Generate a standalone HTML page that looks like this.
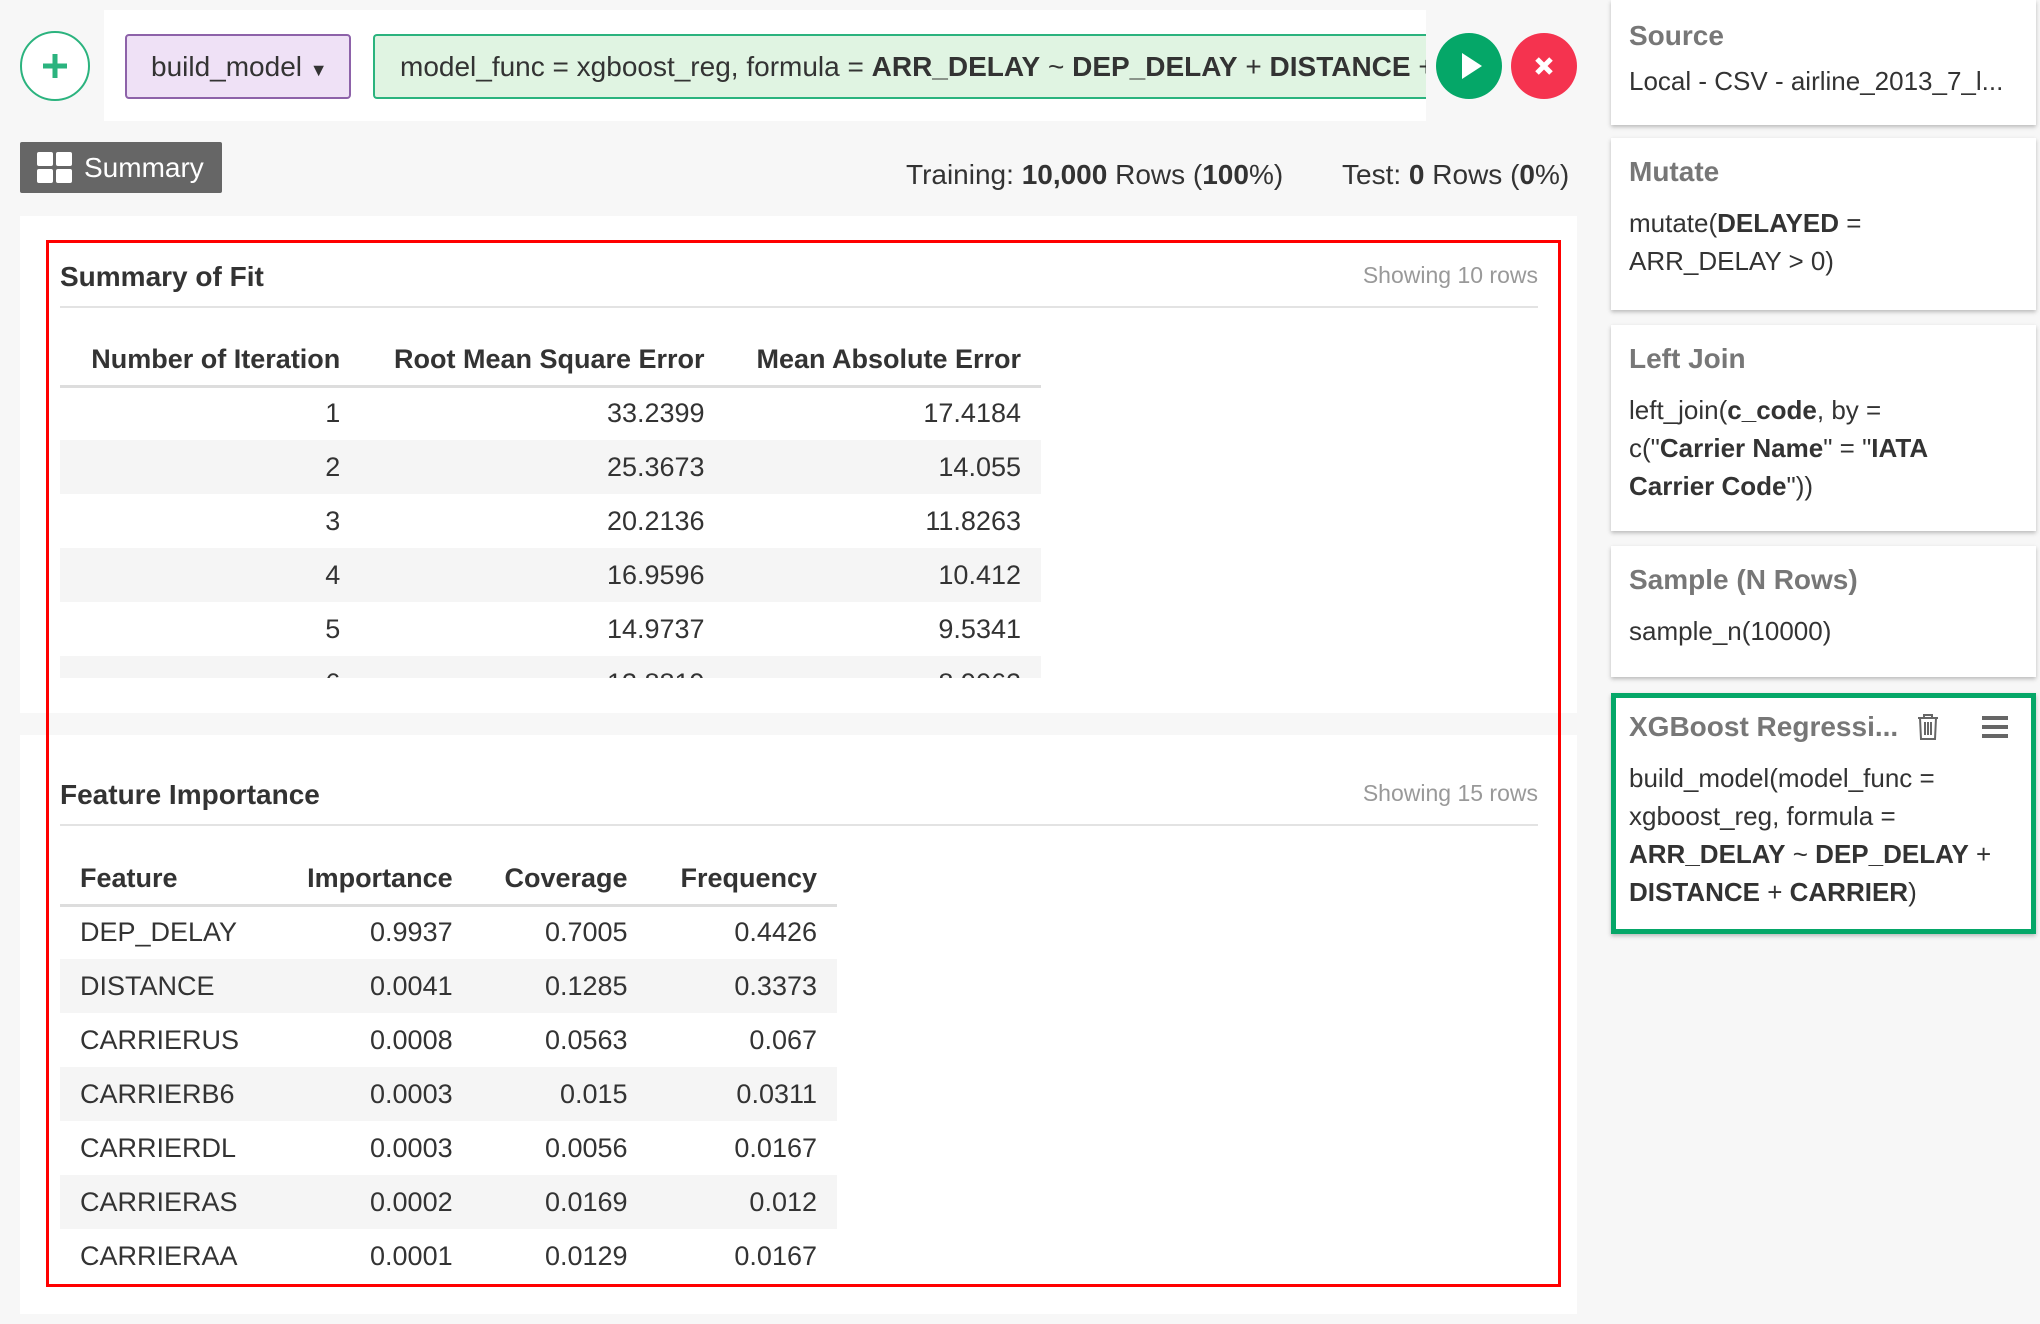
<!DOCTYPE html>
<html><head><meta charset="utf-8"><style>
*{box-sizing:border-box;margin:0;padding:0}
body{width:2040px;height:1324px;background:#f7f7f7;font-family:"Liberation Sans",Arial,sans-serif;color:#333;position:relative;overflow:hidden}
.abs{position:absolute}
.topbar{left:104px;top:10px;width:1322px;height:111px;background:#fff}
.plus{left:20px;top:31px;width:70px;height:70px;border:2px solid #2bb37e;border-radius:50%;background:#fff}
.bm{left:125px;top:34px;width:226px;height:65px;background:#efe1f6;border:2px solid #8d62a9;border-radius:4px;font-size:28px;line-height:61px;padding-left:24px;color:#333}
.fm{left:373px;top:34px;width:1053px;height:65px;background:#e0f4e2;border:2px solid #2bb37e;border-right:none;border-radius:4px 0 0 4px;font-size:28px;line-height:61px;padding-left:25px;white-space:nowrap;overflow:hidden;color:#333}
.circ{width:66px;height:66px;border-radius:50%}
.sumbtn{left:20px;top:142px;width:202px;height:51px;background:#666;border-radius:2px;color:#fff;font-size:28px;line-height:51px;padding-left:64px}
.info{top:159px;font-size:28px;color:#333;white-space:nowrap}
.panel{background:#fff;left:20px;width:1557px}
.red{left:46px;top:240px;width:1515px;height:1047px;border:3px solid #f00}
.h{font-size:28px;font-weight:bold;color:#333}
.showing{font-size:23px;color:#999}
.hr{height:2px;background:#e3e3e3}
table{border-collapse:collapse;font-size:27px;color:#333}
th{font-weight:bold;text-align:right;height:52px;padding:0 20px;border-bottom:3px solid #ddd;vertical-align:middle}
td{text-align:right;height:54px;padding:0 20px}
tr.s td{background:#f5f5f5}
.card{left:1611px;width:425px;background:#fff;box-shadow:0 2px 4px rgba(0,0,0,.25);padding:18px 18px}
.ct{font-size:28px;font-weight:bold;color:#777;margin-bottom:16px}
.cb{font-size:26px;line-height:38px;color:#333}
</style></head><body>
<div class="abs topbar"></div>
<div class="abs plus"><svg width="66" height="66" style="position:absolute;left:0;top:0"><path d="M33 21V45M21 33H45" stroke="#2bb37e" stroke-width="5"/></svg></div>
<div class="abs bm">build_model <span style="font-size:18px">▼</span></div>
<div class="abs fm">model_func = xgboost_reg, formula = <b>ARR_DELAY</b> ~ <b>DEP_DELAY</b> + <b>DISTANCE</b> + <b>CARRIER</b></div>
<div class="abs circ" style="left:1436px;top:33px;background:#05a768"><svg width="66" height="66"><path d="M26 20L46 33L26 46Z" fill="#fff"/></svg></div>
<div class="abs circ" style="left:1511px;top:33px;background:#f5334f"><svg width="66" height="66"><path d="M26 26L40 40M40 26L26 40" stroke="#fff" stroke-width="5"/></svg></div>
<div class="abs sumbtn"><svg width="36" height="32" style="position:absolute;left:17px;top:10px"><rect x="0" y="0" width="16" height="14" rx="2" fill="#fff"/><rect x="19" y="0" width="16" height="14" rx="2" fill="#fff"/><rect x="0" y="17" width="16" height="14" rx="2" fill="#fff"/><rect x="19" y="17" width="16" height="14" rx="2" fill="#fff"/></svg>Summary</div>
<div class="abs info" style="left:906px">Training: <b>10,000</b> Rows (<b>100</b>%)</div>
<div class="abs info" style="left:1342px">Test: <b>0</b> Rows (<b>0</b>%)</div>

<div class="abs panel" style="top:216px;height:497px"></div>
<div class="abs panel" style="top:735px;height:579px"></div>

<div class="abs h" style="left:60px;top:261px">Summary of Fit</div>
<div class="abs showing" style="right:502px;top:262px">Showing 10 rows</div>
<div class="abs hr" style="left:60px;top:306px;width:1478px"></div>
<div class="abs" style="left:60px;top:334px;width:981px;height:344px;overflow:hidden">
<table style="width:981px">
<tr><th>Number of Iteration</th><th>Root Mean Square Error</th><th>Mean Absolute Error</th></tr>
<tr><td>1</td><td>33.2399</td><td>17.4184</td></tr>
<tr class="s"><td>2</td><td>25.3673</td><td>14.055</td></tr>
<tr><td>3</td><td>20.2136</td><td>11.8263</td></tr>
<tr class="s"><td>4</td><td>16.9596</td><td>10.412</td></tr>
<tr><td>5</td><td>14.9737</td><td>9.5341</td></tr>
<tr class="s"><td>6</td><td>13.8819</td><td>8.9062</td></tr>
</table></div>

<div class="abs h" style="left:60px;top:779px">Feature Importance</div>
<div class="abs showing" style="right:502px;top:780px">Showing 15 rows</div>
<div class="abs hr" style="left:60px;top:824px;width:1478px"></div>
<div class="abs" style="left:60px;top:853px;width:777px">
<table style="width:777px">
<tr><th style="text-align:left">Feature</th><th>Importance</th><th>Coverage</th><th>Frequency</th></tr>
<tr><td style="text-align:left">DEP_DELAY</td><td>0.9937</td><td>0.7005</td><td>0.4426</td></tr>
<tr class="s"><td style="text-align:left">DISTANCE</td><td>0.0041</td><td>0.1285</td><td>0.3373</td></tr>
<tr><td style="text-align:left">CARRIERUS</td><td>0.0008</td><td>0.0563</td><td>0.067</td></tr>
<tr class="s"><td style="text-align:left">CARRIERB6</td><td>0.0003</td><td>0.015</td><td>0.0311</td></tr>
<tr><td style="text-align:left">CARRIERDL</td><td>0.0003</td><td>0.0056</td><td>0.0167</td></tr>
<tr class="s"><td style="text-align:left">CARRIERAS</td><td>0.0002</td><td>0.0169</td><td>0.012</td></tr>
<tr><td style="text-align:left">CARRIERAA</td><td>0.0001</td><td>0.0129</td><td>0.0167</td></tr>
</table></div>
<div class="abs red"></div>

<div class="abs card" style="top:0;height:125px;padding-top:20px"><div class="ct" style="margin-bottom:10px">Source</div><div class="cb">Local - CSV - airline_2013_7_l...</div></div>
<div class="abs card" style="top:138px;height:172px"><div class="ct">Mutate</div><div class="cb">mutate(<b>DELAYED</b> =<br>ARR_DELAY &gt; 0)</div></div>
<div class="abs card" style="top:325px;height:206px"><div class="ct">Left Join</div><div class="cb">left_join(<b>c_code</b>, by =<br>c("<b>Carrier Name</b>" = "<b>IATA<br>Carrier Code</b>"))</div></div>
<div class="abs card" style="top:546px;height:131px"><div class="ct">Sample (N Rows)</div><div class="cb">sample_n(10000)</div></div>
<div class="abs card" style="top:693px;height:241px;border:5px solid #05a768;padding:13px 13px">
<div class="ct" style="position:relative">XGBoost Regressi...
<svg width="24" height="28" style="position:absolute;left:287px;top:2px"><path d="M2 5H22M8 5V2H16V5M4 5L5 26H19L20 5M9 9V22M12 9V22M15 9V22" stroke="#666" stroke-width="2" fill="none"/></svg>
<svg width="28" height="24" style="position:absolute;left:353px;top:4px"><path d="M0 3H26M0 12H26M0 21H26" stroke="#666" stroke-width="4"/></svg></div>
<div class="cb">build_model(model_func =<br>xgboost_reg, formula =<br><b>ARR_DELAY</b> ~ <b>DEP_DELAY</b> +<br><b>DISTANCE</b> + <b>CARRIER</b>)</div></div>
</body></html>
